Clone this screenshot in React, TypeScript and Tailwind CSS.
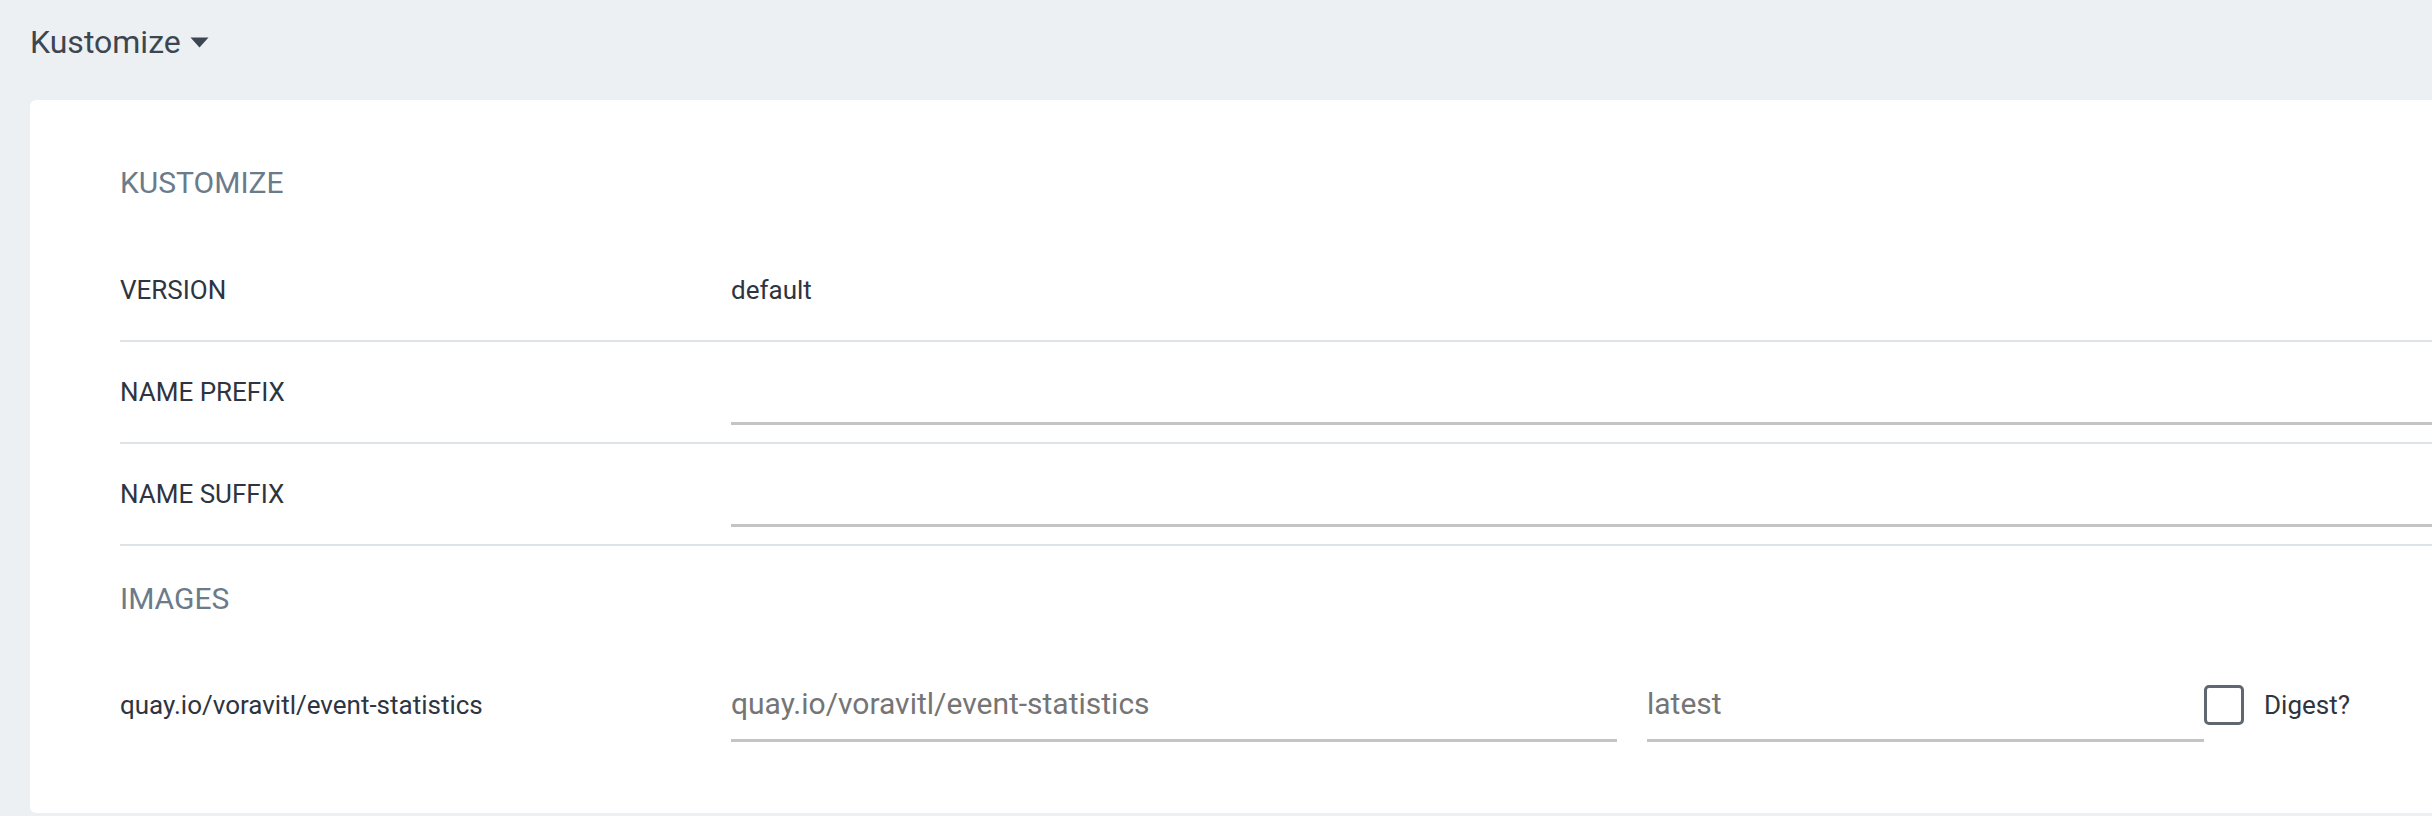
import React from "react";

function Caret() {
  return (
    <svg width="19" height="11" viewBox="0 0 19 11" className="ml-[9px] mt-[1px]">
      <path d="M0.5 0.5 H18.5 L9.5 10.5 Z" fill="#3c4651" />
    </svg>
  );
}

function Row({ label, children }: { label: string; children?: React.ReactNode }) {
  return (
    <div className="flex h-[102px] items-center border-b-2 border-[#dee3e8]">
      <div className="w-[611px] shrink-0 text-[26px] leading-[36px] text-[#2e3440]">{label}</div>
      {children}
    </div>
  );
}

export default function App() {
  return (
    <div className="w-[2432px] h-[816px] overflow-hidden bg-[#ecf0f3] font-[Roboto,sans-serif]">
      <div className="h-[100px] pl-[30px] pt-[23px]">
        <div className="flex items-center h-[38px]">
          <span className="text-[32px] leading-[38px] text-[#3c4651]">Kustomize</span>
          <Caret />
        </div>
      </div>
      <div className="ml-[30px] bg-white rounded-l-[6px] pl-[90px] pt-[65px] pb-[58px]">
        <div className="h-[36px] text-[30px] leading-[36px] text-[#6b7b8a] mb-[39px]">KUSTOMIZE</div>
        <Row label="VERSION">
          <div className="text-[26px] leading-[36px] text-[#2e3440]">default</div>
        </Row>
        <Row label="NAME PREFIX">
          <input
            className="flex-1 h-[74px] mb-[8px] border-b-[3px] border-[#c4c4c4] outline-none text-[30px] text-[#333]"
            aria-label="name prefix"
          />
        </Row>
        <Row label="NAME SUFFIX">
          <input
            className="flex-1 h-[74px] mb-[8px] border-b-[3px] border-[#c4c4c4] outline-none text-[30px] text-[#333]"
            aria-label="name suffix"
          />
        </Row>
        <div className="h-[36px] mt-[35px] text-[30px] leading-[36px] text-[#6b7b8a]">IMAGES</div>
        <div className="flex h-[100px] items-center mt-[38px]">
          <div className="w-[611px] shrink-0 text-[26px] leading-[36px] text-[#2e3440]">
            quay.io/voravitl/event-statistics
          </div>
          <input
            className="w-[886px] h-[74px] border-b-[3px] border-[#c4c4c4] outline-none text-[30px] text-[#333] placeholder:text-[#757575]"
            placeholder="quay.io/voravitl/event-statistics"
          />
          <input
            className="ml-[30px] w-[557px] h-[74px] border-b-[3px] border-[#c4c4c4] outline-none text-[30px] text-[#333] placeholder:text-[#757575]"
            placeholder="latest"
          />
          <div className="w-[40px] h-[40px] border-[3px] border-[#5f6870] rounded-[5px] shrink-0" />
          <span className="ml-[20px] text-[26px] leading-[36px] text-[#2e3440]">Digest?</span>
        </div>
      </div>
    </div>
  );
}
